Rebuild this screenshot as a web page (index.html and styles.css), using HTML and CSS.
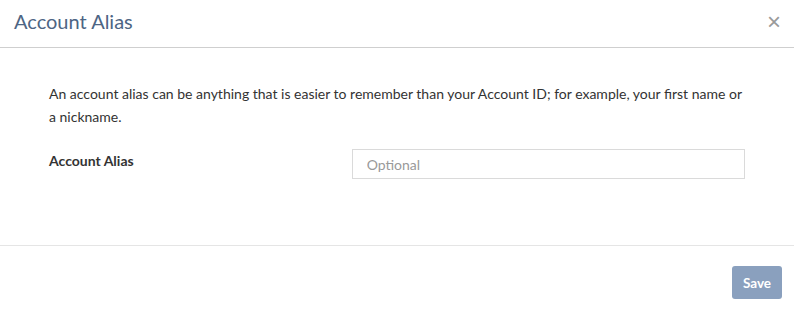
FILE: index.html
```html
<!DOCTYPE html>
<html>
<head>
<meta charset="utf-8">
<link rel="stylesheet" href="styles.css">
</head>
<body>
<div class="modal">
  <div class="modal-header">
    <h4 class="modal-title">Account Alias</h4>
    <span class="close">&times;</span>
  </div>
  <div class="modal-body">
    <p class="intro">An account alias can be anything that is easier to remember than your Account ID; for example, your first name or a nickname.</p>
    <div class="form-row">
      <label class="label">Account Alias</label>
      <input class="input" type="text" placeholder="Optional">
    </div>
  </div>
  <div class="modal-footer">
    <button class="btn-save">Save</button>
  </div>
</div>
</body>
</html>
```

FILE: styles.css
```css
html, body {
  margin: 0;
  padding: 0;
  background: #fff;
}
.modal {
  width: 794px;
  height: 313px;
  font-family: "Lato", "Liberation Sans", sans-serif;
  color: #333;
}
.modal-header {
  height: 48px;
  border-bottom: 1px solid #cfcfcf;
  display: flex;
  align-items: center;
  justify-content: space-between;
  padding: 0 13px 0 14px;
  box-sizing: border-box;
}
.modal-title {
  margin: 0;
  font-size: 20px;
  font-weight: 400;
  color: #4d6584;
  margin-top: -6px;
}
.close {
  font-size: 24px;
  color: #9a9a9a;
  line-height: 1;
  margin-top: -4px;
  font-family: "Liberation Sans", sans-serif;
}
.modal-body {
  height: 198px;
  padding: 34px 49px 0 49px;
  box-sizing: border-box;
  border-bottom: 1px solid #e5e5e5;
}
.intro {
  margin: 0;
  font-size: 14px;
  line-height: 23px;
  color: #333;
  width: 698px;
}
.form-row {
  display: flex;
  align-items: flex-start;
  margin-top: 21px;
}
.label {
  width: 304px;
  font-size: 14px;
  font-weight: 700;
  line-height: 23px;
  padding-top: 0;
}
.input {
  width: 395px;
  height: 30px;
  box-sizing: border-box;
  border: 1px solid #dadada;
  padding: 0 14px;
  font-family: inherit;
  font-size: 14px;
  color: #333;
  outline: none;
  margin: 0;
}
.input::placeholder {
  color: #999;
}
.modal-footer {
  display: flex;
  justify-content: flex-end;
  padding: 20px 12px 0 0;
}
.btn-save {
  width: 50px;
  height: 33px;
  border: none;
  border-radius: 3px;
  background: #8aa0be;
  color: #fff;
  font-family: inherit;
  font-weight: 700;
  font-size: 13.5px;
  padding: 0;
}
```
